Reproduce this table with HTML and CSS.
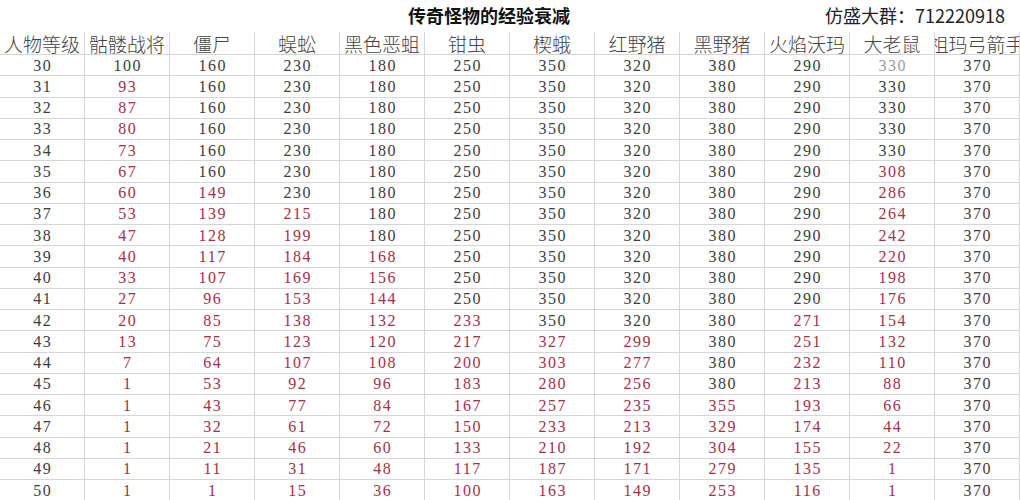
FILE: index.html
```html
<!DOCTYPE html>
<html lang="zh-CN">
<head>
<meta charset="utf-8">
<title>传奇怪物的经验衰减</title>
<link rel="stylesheet" href="styles.css">
</head>
<body>
<div class="sheet">
  <div class="title-row">
    <div class="title">传奇怪物的经验衰减</div>
    <div class="qq">仿盛大群：712220918</div>
  </div>
  <div class="grid">
    <div class="h">人物等级</div><div class="h">骷髅战将</div><div class="h">僵尸</div><div class="h">蜈蚣</div><div class="h">黑色恶蛆</div><div class="h">钳虫</div><div class="h">楔蛾</div><div class="h">红野猪</div><div class="h">黑野猪</div><div class="h">火焰沃玛</div><div class="h">大老鼠</div><div class="h clip">祖玛弓箭手</div>

    <div class="c">30</div><div class="c">100</div><div class="c">160</div><div class="c">230</div><div class="c">180</div><div class="c">250</div><div class="c">350</div><div class="c">320</div><div class="c">380</div><div class="c">290</div><div class="c faded">330</div><div class="c">370</div>
    <div class="c">31</div><div class="c r">93</div><div class="c">160</div><div class="c">230</div><div class="c">180</div><div class="c">250</div><div class="c">350</div><div class="c">320</div><div class="c">380</div><div class="c">290</div><div class="c">330</div><div class="c">370</div>
    <div class="c">32</div><div class="c r">87</div><div class="c">160</div><div class="c">230</div><div class="c">180</div><div class="c">250</div><div class="c">350</div><div class="c">320</div><div class="c">380</div><div class="c">290</div><div class="c">330</div><div class="c">370</div>
    <div class="c">33</div><div class="c r">80</div><div class="c">160</div><div class="c">230</div><div class="c">180</div><div class="c">250</div><div class="c">350</div><div class="c">320</div><div class="c">380</div><div class="c">290</div><div class="c">330</div><div class="c">370</div>
    <div class="c">34</div><div class="c r">73</div><div class="c">160</div><div class="c">230</div><div class="c">180</div><div class="c">250</div><div class="c">350</div><div class="c">320</div><div class="c">380</div><div class="c">290</div><div class="c">330</div><div class="c">370</div>
    <div class="c">35</div><div class="c r">67</div><div class="c">160</div><div class="c">230</div><div class="c">180</div><div class="c">250</div><div class="c">350</div><div class="c">320</div><div class="c">380</div><div class="c">290</div><div class="c r">308</div><div class="c">370</div>
    <div class="c">36</div><div class="c r">60</div><div class="c r">149</div><div class="c">230</div><div class="c">180</div><div class="c">250</div><div class="c">350</div><div class="c">320</div><div class="c">380</div><div class="c">290</div><div class="c r">286</div><div class="c">370</div>
    <div class="c">37</div><div class="c r">53</div><div class="c r">139</div><div class="c r">215</div><div class="c">180</div><div class="c">250</div><div class="c">350</div><div class="c">320</div><div class="c">380</div><div class="c">290</div><div class="c r">264</div><div class="c">370</div>
    <div class="c">38</div><div class="c r">47</div><div class="c r">128</div><div class="c r">199</div><div class="c">180</div><div class="c">250</div><div class="c">350</div><div class="c">320</div><div class="c">380</div><div class="c">290</div><div class="c r">242</div><div class="c">370</div>
    <div class="c">39</div><div class="c r">40</div><div class="c r">117</div><div class="c r">184</div><div class="c r">168</div><div class="c">250</div><div class="c">350</div><div class="c">320</div><div class="c">380</div><div class="c">290</div><div class="c r">220</div><div class="c">370</div>
    <div class="c">40</div><div class="c r">33</div><div class="c r">107</div><div class="c r">169</div><div class="c r">156</div><div class="c">250</div><div class="c">350</div><div class="c">320</div><div class="c">380</div><div class="c">290</div><div class="c r">198</div><div class="c">370</div>
    <div class="c">41</div><div class="c r">27</div><div class="c r">96</div><div class="c r">153</div><div class="c r">144</div><div class="c">250</div><div class="c">350</div><div class="c">320</div><div class="c">380</div><div class="c">290</div><div class="c r">176</div><div class="c">370</div>
    <div class="c">42</div><div class="c r">20</div><div class="c r">85</div><div class="c r">138</div><div class="c r">132</div><div class="c r">233</div><div class="c">350</div><div class="c">320</div><div class="c">380</div><div class="c r">271</div><div class="c r">154</div><div class="c">370</div>
    <div class="c">43</div><div class="c r">13</div><div class="c r">75</div><div class="c r">123</div><div class="c r">120</div><div class="c r">217</div><div class="c r">327</div><div class="c r">299</div><div class="c">380</div><div class="c r">251</div><div class="c r">132</div><div class="c">370</div>
    <div class="c">44</div><div class="c r">7</div><div class="c r">64</div><div class="c r">107</div><div class="c r">108</div><div class="c r">200</div><div class="c r">303</div><div class="c r">277</div><div class="c">380</div><div class="c r">232</div><div class="c r">110</div><div class="c">370</div>
    <div class="c">45</div><div class="c r">1</div><div class="c r">53</div><div class="c r">92</div><div class="c r">96</div><div class="c r">183</div><div class="c r">280</div><div class="c r">256</div><div class="c">380</div><div class="c r">213</div><div class="c r">88</div><div class="c">370</div>
    <div class="c">46</div><div class="c r">1</div><div class="c r">43</div><div class="c r">77</div><div class="c r">84</div><div class="c r">167</div><div class="c r">257</div><div class="c r">235</div><div class="c r">355</div><div class="c r">193</div><div class="c r">66</div><div class="c">370</div>
    <div class="c">47</div><div class="c r">1</div><div class="c r">32</div><div class="c r">61</div><div class="c r">72</div><div class="c r">150</div><div class="c r">233</div><div class="c r">213</div><div class="c r">329</div><div class="c r">174</div><div class="c r">44</div><div class="c">370</div>
    <div class="c">48</div><div class="c r">1</div><div class="c r">21</div><div class="c r">46</div><div class="c r">60</div><div class="c r">133</div><div class="c r">210</div><div class="c r">192</div><div class="c r">304</div><div class="c r">155</div><div class="c r">22</div><div class="c">370</div>
    <div class="c">49</div><div class="c r">1</div><div class="c r">11</div><div class="c r">31</div><div class="c r">48</div><div class="c r">117</div><div class="c r">187</div><div class="c r">171</div><div class="c r">279</div><div class="c r">135</div><div class="c r">1</div><div class="c">370</div>
    <div class="c">50</div><div class="c r">1</div><div class="c r">1</div><div class="c r">15</div><div class="c r">36</div><div class="c r">100</div><div class="c r">163</div><div class="c r">149</div><div class="c r">253</div><div class="c r">116</div><div class="c r">1</div><div class="c">370</div>
  </div>
</div>
</body>
</html>
```
FILE: styles.css
```css
html, body {
  margin: 0;
  padding: 0;
  background: #ffffff;
}

body {
  font-family: "Noto Sans CJK SC", "Noto Sans", sans-serif;
  color: #333333;
}

.sheet {
  width: 1020px;
  height: 500px;
  overflow: hidden;
}

.title-row {
  display: flex;
  align-items: flex-start;
  height: 32px;
  padding-top: 3px;
  box-sizing: border-box;
}

.title {
  margin-left: 408px;
  font-size: 18px;
  font-weight: bold;
  line-height: 24px;
  color: #111111;
}

.qq {
  margin-left: auto;
  margin-right: 15px;
  font-size: 18px;
  line-height: 24px;
  color: #222222;
}

.grid {
  display: grid;
  grid-template-columns: repeat(12, 85px);
  grid-template-rows: 23px repeat(21, 21.25px);
}

.h,
.c {
  box-sizing: border-box;
  border-right: 1px solid #d6d6d6;
  border-bottom: 1px solid #d6d6d6;
  display: flex;
  align-items: center;
  justify-content: center;
  white-space: nowrap;
}

.h {
  font-size: 19px;
  font-weight: 300;
  line-height: 20px;
  padding-top: 1px;
  color: #444444;
}

.h.clip {
  overflow: hidden;
}

.c {
  font-family: "Liberation Serif", "Times New Roman", serif;
  font-size: 16px;
  letter-spacing: 1.5px;
  padding-left: 1.5px;
  padding-top: 1px;
  color: #3c3c3c;
}

.c.r {
  color: #a3304a;
}

.c.faded {
  color: #9a9a9a;
}
```
